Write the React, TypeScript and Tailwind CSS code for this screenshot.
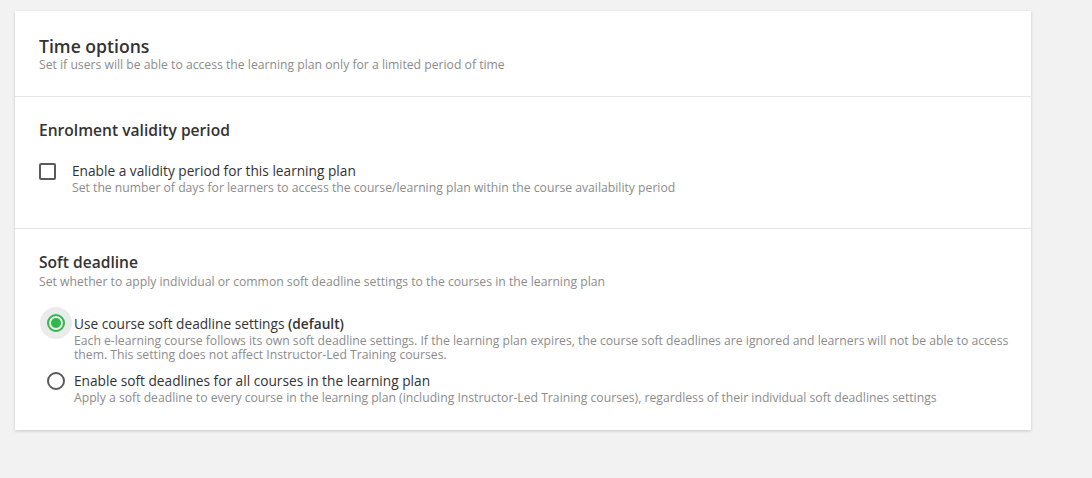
export default function App() {
  return (
    <div
      className="min-h-[478px] w-[1092px] bg-[#f2f2f2] pt-[11px] pl-[15px]"
      style={{ fontFamily: '"Open Sans", "Noto Sans", sans-serif' }}
    >
      <div className="w-[1016px] bg-white shadow-[0_1px_3px_rgba(0,0,0,0.18)]">
        {/* Time options */}
        <div className="border-b border-[#e6e6e6] px-6 pt-6 pb-[23px]">
          <h2 className="text-[17.6px] leading-[22px] font-semibold text-[#333]">Time options</h2>
          <p className="text-[12.2px] leading-4 text-[#8c8c8c]">
            Set if users will be able to access the learning plan only for a limited period of time
          </p>
        </div>

        {/* Enrolment validity */}
        <div className="border-b border-[#e6e6e6] px-6 pt-[23px] pb-8">
          <h3 className="text-[15.6px] leading-5 font-semibold text-[#333]">Enrolment validity period</h3>
          <div className="mt-[21px] flex items-start">
            <div className="mt-[2px] h-[17px] w-[17px] rounded-[2px] border-2 border-[#5a5a5a]" />
            <div className="ml-4">
              <div className="text-[13.7px] leading-[19px] text-[#333]">Enable a validity period for this learning plan</div>
              <div className="text-[12.2px] leading-4 text-[#8c8c8c]">
                Set the number of days for learners to access the course/learning plan within the course availability period
              </div>
            </div>
          </div>
        </div>

        {/* Soft deadline */}
        <div className="pl-6 pr-4 pt-[23px] pb-[25px]">
          <h3 className="text-[15.6px] leading-5 font-semibold text-[#333]">Soft deadline</h3>
          <p className="mt-[2px] text-[12.2px] leading-4 text-[#8c8c8c]">
            Set whether to apply individual or common soft deadline settings to the courses in the learning plan
          </p>

          <div className="mt-[17px] flex items-start">
            <div className="ml-[1px] flex h-8 w-8 shrink-0 items-center justify-center rounded-full bg-[#ebebeb]">
              <div className="flex h-[18px] w-[18px] items-center justify-center rounded-full border-2 border-[#2fb84b]">
                <div className="h-[10px] w-[10px] rounded-full bg-[#2fb84b]" />
              </div>
            </div>
            <div className="ml-[2px] pt-[7px]">
              <div className="text-[13.7px] leading-5 text-[#333]">
                Use course soft deadline settings <span className="font-semibold">(default)</span>
              </div>
              <div className="text-[12.2px] leading-[14px] text-[#8c8c8c]">
                Each e-learning course follows its own soft deadline settings. If the learning plan expires, the course soft deadlines are ignored and learners will not be able to access them. This setting does not affect Instructor-Led Training courses.
              </div>
            </div>
          </div>

          <div className="mt-[3px] flex items-start">
            <div className="ml-[1px] flex h-8 w-8 shrink-0 items-center justify-center rounded-full">
              <div className="h-[18px] w-[18px] rounded-full border-2 border-[#5a5a5a]" />
            </div>
            <div className="ml-[2px] pt-[6px]">
              <div className="text-[13.7px] leading-5 text-[#333]">Enable soft deadlines for all courses in the learning plan</div>
              <div className="text-[12.2px] leading-[14px] text-[#8c8c8c]">
                Apply a soft deadline to every course in the learning plan (including Instructor-Led Training courses), regardless of their individual soft deadlines settings
              </div>
            </div>
          </div>
        </div>
      </div>
    </div>
  );
}
